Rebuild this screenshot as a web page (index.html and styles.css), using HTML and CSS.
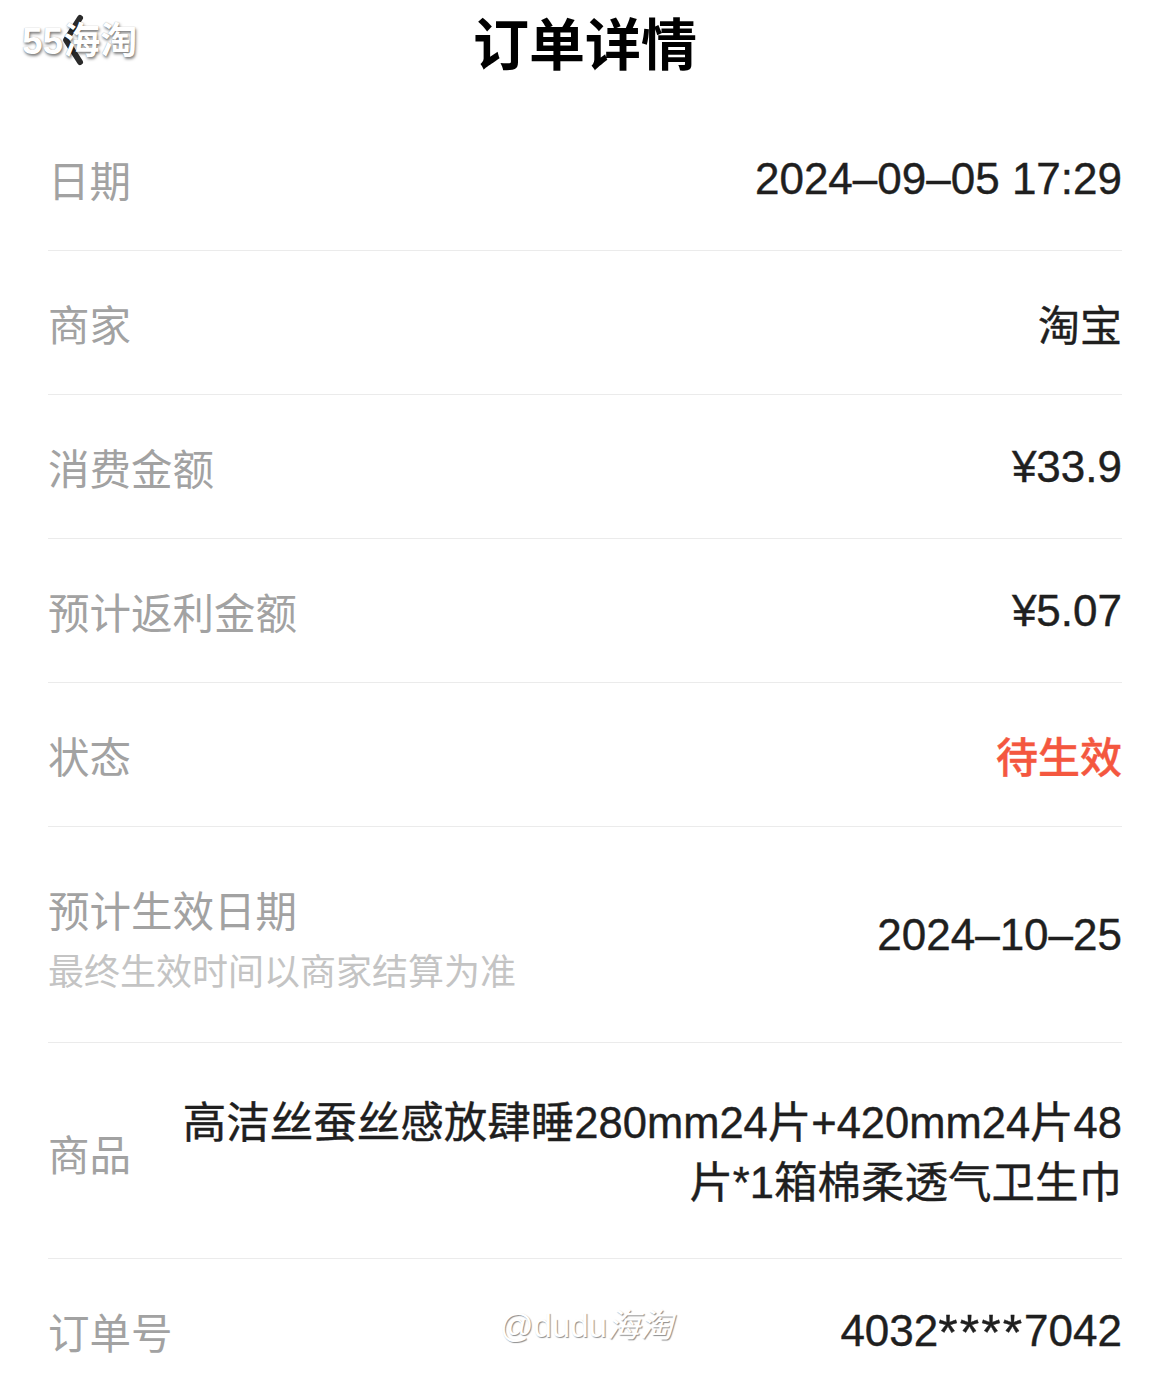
FILE: index.html
```html
<!DOCTYPE html>
<html lang="zh-CN">
<head>
  <meta charset="utf-8" />
  <meta name="viewport" content="width=device-width, initial-scale=1.0" />
  <title>订单详情</title>
  <link rel="stylesheet" href="styles.css">
</head>
<body>
  <header class="topbar">
    <a class="back" href="#" aria-label="返回">
      <svg width="30" height="56" viewBox="0 0 30 56">
        <path d="M22 6 L8 28 L22 50" fill="none" stroke="#2b2b2b" stroke-width="6" stroke-linecap="round" stroke-linejoin="round"/>
      </svg>
    </a>
    <span class="brand-mark">55海淘</span>
    <h1>订单详情</h1>
  </header>

  <main class="detail">
    <div class="row">
      <span class="label">日期</span>
      <span class="value">2024–09–05 17:29</span>
    </div>
    <div class="row">
      <span class="label">商家</span>
      <span class="value cjk">淘宝</span>
    </div>
    <div class="row">
      <span class="label">消费金额</span>
      <span class="value">¥33.9</span>
    </div>
    <div class="row">
      <span class="label">预计返利金额</span>
      <span class="value">¥5.07</span>
    </div>
    <div class="row">
      <span class="label">状态</span>
      <span class="value cjk pending">待生效</span>
    </div>
    <div class="row with-hint">
      <div class="label-group">
        <span class="label">预计生效日期</span>
        <span class="hint">最终生效时间以商家结算为准</span>
      </div>
      <span class="value">2024–10–25</span>
    </div>
    <div class="row goods">
      <span class="label">商品</span>
      <span class="value product">高洁丝蚕丝感放肆睡280mm24片+420mm24片48片*1箱棉柔透气卫生巾</span>
    </div>
    <div class="row last">
      <span class="label">订单号</span>
      <span class="value">4032<span class="mask">****</span>7042</span>
    </div>
  </main>

  <div class="watermark">@dudu<em>海淘</em></div>
</body>
</html>
```

FILE: styles.css
```css
body {
  margin: 0;
  background: #ffffff;
  font-family: "Liberation Sans", "Noto Sans CJK SC", sans-serif;
  color: #1f1f1f;
  overflow: hidden;
}
.topbar {
  position: relative;
  height: 82px;
  display: flex;
  align-items: flex-start;
  justify-content: center;
}
.topbar h1 {
  margin: 0;
  font-family: "Noto Sans CJK SC", sans-serif;
  font-size: 56px;
  line-height: normal;
  font-weight: 700;
  color: #000;
}
.back {
  position: absolute;
  left: 58px;
  top: 12px;
  display: block;
  line-height: 0;
}
.brand-mark {
  position: absolute;
  left: 22px;
  top: 22px;
  font-size: 37px;
  line-height: 40px;
  font-weight: 700;
  color: #ffffff;
  text-shadow: 1px 2px 3px rgba(0, 0, 0, 0.5), 0 0 1px rgba(0, 0, 0, 0.35);
}
.detail {
  margin-top: 25px;
  padding: 0 48px;
}
.row {
  display: flex;
  align-items: center;
  justify-content: space-between;
  min-height: 143px;
  border-bottom: 1px solid #ebebeb;
}
.row.with-hint {
  min-height: 0;
  padding: 43px 0 42px;
}
.row.goods {
  min-height: 0;
  padding: 50px 0 45px;
}
.row.last {
  border-bottom: none;
}
.label {
  font-family: "Noto Sans CJK SC", sans-serif;
  font-size: 41.5px;
  line-height: 58px;
  color: #a2a2a2;
  white-space: nowrap;
}
.label-group {
  display: flex;
  flex-direction: column;
  padding-top: 10px;
}
.hint {
  font-family: "Noto Sans CJK SC", sans-serif;
  font-size: 36px;
  line-height: 62px;
  color: #c4c4c4;
  white-space: nowrap;
}
.value {
  font-size: 44px;
  line-height: 60px;
  color: #1f1f1f;
  text-align: right;
  -webkit-text-stroke: 0.4px #1f1f1f;
}
.value.cjk {
  font-family: "Noto Sans CJK SC", sans-serif;
  font-size: 42px;
}
.value.pending {
  font-weight: 500;
  color: #f4573f;
  -webkit-text-stroke: 0.4px #f4573f;
}
.value.product {
  font-size: 43.5px;
  max-width: 950px;
  margin-left: 40px;
}
.mask {
  font-size: 50px;
  letter-spacing: 2px;
  vertical-align: -4px;
  line-height: 0;
}
.watermark {
  position: absolute;
  left: 500px;
  top: 1306px;
  font-size: 33px;
  line-height: 40px;
  color: #ffffff;
  text-shadow: 1px 1px 1px rgba(0, 0, 0, 0.45);
}
.watermark em {
  font-style: italic;
}
```
